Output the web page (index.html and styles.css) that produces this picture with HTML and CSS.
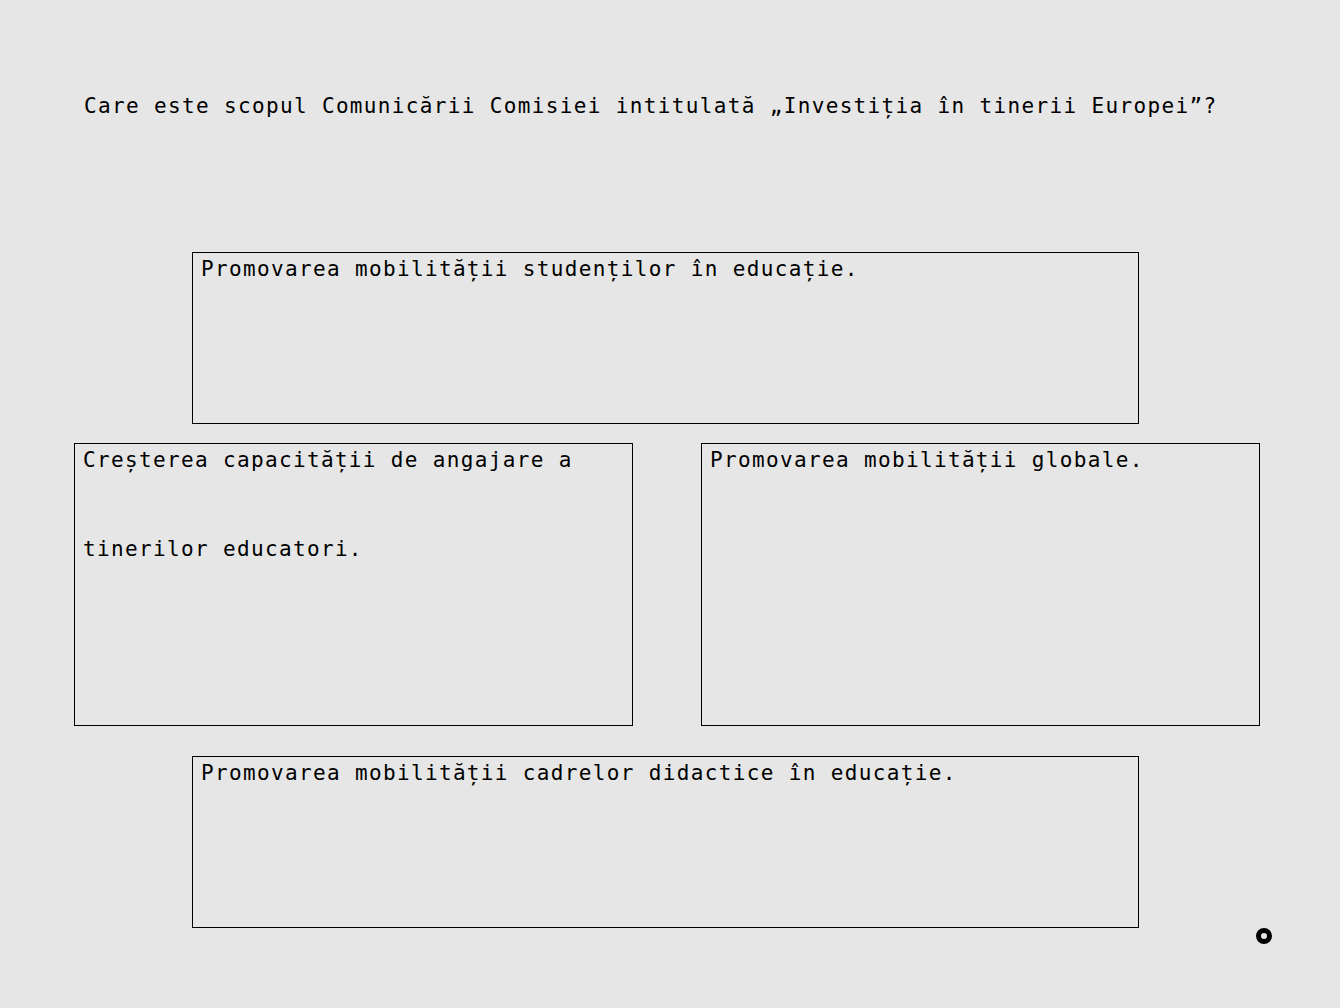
FILE: index.html
```html
<!DOCTYPE html>
<html lang="ro">
<head>
<meta charset="utf-8">
<title>Întrebare</title>
<link rel="stylesheet" href="styles.css">
</head>
<body>
<main class="quiz">
  <h1 class="question">Care este scopul Comunicării Comisiei intitulată „Investiția în tinerii Europei”?</h1>
  <div class="answers">
    <div class="row row-single">
      <div class="answer answer-wide"><p>Promovarea mobilității studenților în educație.</p></div>
    </div>
    <div class="row row-pair">
      <div class="answer answer-tall"><p class="spaced">Creșterea capacității de angajare a tinerilor educatori.</p></div>
      <div class="answer answer-tall"><p>Promovarea mobilității globale.</p></div>
    </div>
    <div class="row row-single">
      <div class="answer answer-wide"><p>Promovarea mobilității cadrelor didactice în educație.</p></div>
    </div>
  </div>
</main>
<span class="ring" aria-hidden="true"></span>
</body>
</html>
```
FILE: styles.css
```css
html, body {
  margin: 0;
  padding: 0;
  background: #e6e6e6;
  color: #000;
  font-family: "DejaVu Sans Mono", "Liberation Mono", monospace;
}

.quiz {
  width: 1186px;
  margin-left: 74px;
  padding-top: 93px;
}

.question {
  margin: 0 0 0 10px;
  font-size: 21px;
  font-weight: normal;
  letter-spacing: 1.35px;
  line-height: 26px;
}

.answers {
  margin-top: 133px;
  display: flex;
  flex-direction: column;
}

.row {
  display: flex;
}

.row-single {
  padding-left: 118px;
}

.row-pair {
  margin-top: 19px;
  margin-bottom: 30px;
  gap: 68px;
}

.answer {
  box-sizing: border-box;
  border: 1px solid #000;
  padding: 4px 8px;
  overflow: hidden;
}

.answer p {
  margin: 0;
  font-size: 21px;
  letter-spacing: 1.35px;
  line-height: 24px;
}

.answer p.spaced {
  line-height: 89px;
  margin-top: -32px;
}

.answer-wide {
  width: 947px;
  height: 172px;
}

.answer-tall {
  width: 559px;
  height: 283px;
}

.ring {
  position: absolute;
  left: 1256px;
  top: 928px;
  width: 6px;
  height: 6px;
  border: 5px solid #000;
  border-radius: 50%;
}
```
